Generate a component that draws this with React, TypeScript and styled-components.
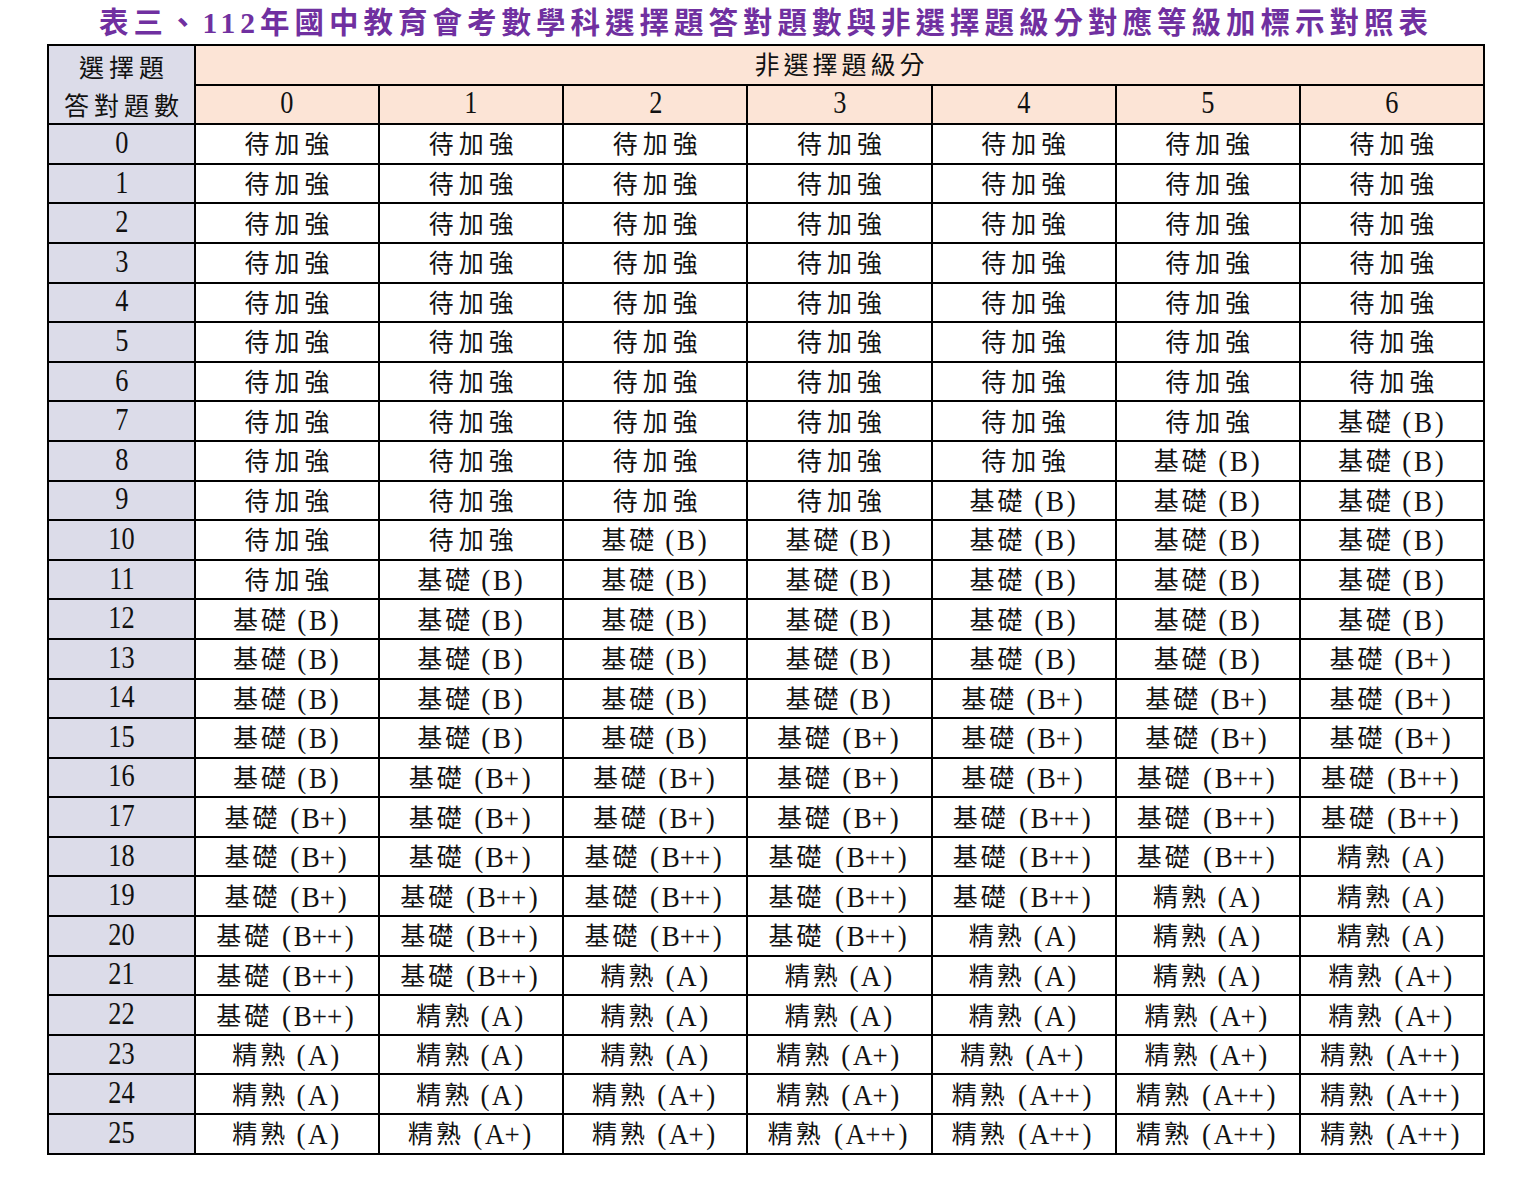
import React from "react";
import styled, { createGlobalStyle } from "styled-components";

const Global = createGlobalStyle`
  html, body { margin: 0; padding: 0; background: #ffffff; }
  body { font-family: "Liberation Serif", "Noto Sans CJK TC", serif; }
`;

const Page = styled.div`
  width: 1438px;
  margin-left: 47px;
  padding-top: 4px;
`;

const Title = styled.h1`
  margin: 0 0 2px 0;
  text-align: center;
  color: #7030a0;
  font-family: "Liberation Serif", "Noto Sans CJK TC", serif;
  font-weight: 700;
  font-size: 29.5px;
  letter-spacing: 5px;
  line-height: 38px;
  white-space: nowrap;
`;

const Table = styled.table`
  width: 1438px;
  border-collapse: collapse;
  table-layout: fixed;
  border: 2px solid #000;
`;

const FirstCol = styled.col`
  width: 147px;
`;

const Cell = styled.td<{ $bg?: string; $tall?: boolean }>`
  border: 2px solid #000;
  height: ${(p) => (p.$tall ? "75px" : "37.6px")};
  padding: 0;
  text-align: center;
  vertical-align: middle;
  background: ${(p) => p.$bg || "#ffffff"};
  color: #111;
  font-size: 25px;
  line-height: 30px;
  white-space: nowrap;
`;

const Word = styled.span<{ $sp: number }>`
  font-family: "Noto Sans CJK TC", sans-serif;
  font-size: 25px;
  letter-spacing: ${(p) => p.$sp}px;
  margin-right: -${(p) => p.$sp}px;
  font-weight: 400;
`;

const Latin = styled.span`
  display: inline-block;
  font-family: "Liberation Serif", serif;
  font-size: 30px;
  transform: scaleX(0.9);
  margin-left: 9px;
  vertical-align: -1px;
`;

const Inner = styled.span`
  margin: 0 3px;
`;

const Num = styled.span`
  display: inline-block;
  font-family: "Liberation Serif", serif;
  font-size: 31px;
  transform: scaleX(0.85);
`;

const HeadLabel = styled.div`
  font-family: "Noto Sans CJK TC", sans-serif;
  font-size: 25px;
  letter-spacing: 5px;
  margin-right: -5px;
  line-height: 38px;
`;

const LAV = "#dcdce9";
const PEACH = "#fce4d6";

const W = "待加強";
const B = "B";
const Bp = "B+";
const Bpp = "B++";
const A = "A";
const Ap = "A+";
const App2 = "A++";

const rep = (v: string, n: number) => Array(n).fill(v);

const rows: string[][] = [
  rep(W, 7),
  rep(W, 7),
  rep(W, 7),
  rep(W, 7),
  rep(W, 7),
  rep(W, 7),
  rep(W, 7),
  [...rep(W, 6), B],
  [...rep(W, 5), B, B],
  [...rep(W, 4), ...rep(B, 3)],
  [...rep(W, 2), ...rep(B, 5)],
  [W, ...rep(B, 6)],
  rep(B, 7),
  [...rep(B, 6), Bp],
  [...rep(B, 4), ...rep(Bp, 3)],
  [...rep(B, 3), ...rep(Bp, 4)],
  [B, ...rep(Bp, 4), ...rep(Bpp, 2)],
  [...rep(Bp, 4), ...rep(Bpp, 3)],
  [...rep(Bp, 2), ...rep(Bpp, 4), A],
  [Bp, ...rep(Bpp, 4), A, A],
  [...rep(Bpp, 4), ...rep(A, 3)],
  [...rep(Bpp, 2), ...rep(A, 4), Ap],
  [Bpp, ...rep(A, 4), Ap, Ap],
  [...rep(A, 3), ...rep(Ap, 3), App2],
  [...rep(A, 2), ...rep(Ap, 2), ...rep(App2, 3)],
  [A, ...rep(Ap, 2), ...rep(App2, 4)],
];

function Grade({ v }: { v: string }) {
  if (v === W) return <Word $sp={5}>待加強</Word>;
  const word = v.startsWith("B") ? "基礎" : "精熟";
  return (
    <>
      <Word $sp={3}>{word}</Word>
      <Latin>
        (<Inner>{v}</Inner>)
      </Latin>
    </>
  );
}

export default function App() {
  return (
    <>
      <Global />
      <Page>
        <Title>表三、112年國中教育會考數學科選擇題答對題數與非選擇題級分對應等級加標示對照表</Title>
        <Table>
          <colgroup>
            <FirstCol />
            {Array.from({ length: 7 }).map((_, i) => (
              <col key={i} />
            ))}
          </colgroup>
          <tbody>
            <tr>
              <Cell rowSpan={2} $bg={LAV} $tall>
                <HeadLabel>選擇題</HeadLabel>
                <HeadLabel>答對題數</HeadLabel>
              </Cell>
              <Cell colSpan={7} $bg={PEACH}>
                <Word $sp={4}>非選擇題級分</Word>
              </Cell>
            </tr>
            <tr>
              {Array.from({ length: 7 }).map((_, i) => (
                <Cell key={i} $bg={PEACH}>
                  <Num>{i}</Num>
                </Cell>
              ))}
            </tr>
            {rows.map((r, ri) => (
              <tr key={ri}>
                <Cell $bg={LAV}>
                  <Num>{ri}</Num>
                </Cell>
                {r.map((v, ci) => (
                  <Cell key={ci}>
                    <Grade v={v} />
                  </Cell>
                ))}
              </tr>
            ))}
          </tbody>
        </Table>
      </Page>
    </>
  );
}
